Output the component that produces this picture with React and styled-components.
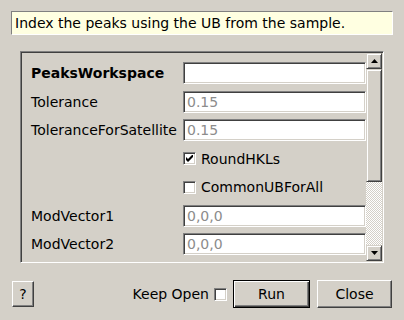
import React from "react";
import styled, { createGlobalStyle } from "styled-components";

const Global = createGlobalStyle`
  html, body { margin: 0; padding: 0; background: #d4d0c8; }
  body { width: 404px; height: 320px; overflow: hidden; font-family: "DejaVu Sans", sans-serif; font-size: 14px; color: #000; }
`;

const Dialog = styled.div`
  width: 404px;
  height: 320px;
  display: flex;
  flex-direction: column;
  box-sizing: border-box;
`;

const Description = styled.div`
  margin: 11px 11px 0 11px;
  height: 24px;
  box-sizing: border-box;
  background: #ffffe1;
  border: 1px solid;
  border-color: #808080 #ffffff #ffffff #808080;
  padding: 0 3px;
  display: flex;
  align-items: center;
  white-space: nowrap;
`;

const Frame = styled.div`
  margin: 16px 20px 0 20px;
  height: 212px;
  box-sizing: border-box;
  border: 1px solid;
  border-color: #808080 #ffffff #ffffff #808080;
  box-shadow: inset 1px 1px #404040, inset -1px -1px #d4d0c8;
  padding: 1px;
  display: flex;
`;

const Viewport = styled.div`
  flex: 1;
  overflow: hidden;
  padding: 9px 0 0 9px;
  display: grid;
  grid-template-columns: 152px 1fr;
  grid-auto-rows: 22px;
  row-gap: 6.5px;
  align-content: start;
`;

const Label = styled.div`
  display: flex;
  align-items: center;
  font-weight: ${(p) => (p.$bold ? "bold" : "normal")};
  white-space: nowrap;
`;

const Input = styled.div`
  box-sizing: border-box;
  height: 22px;
  background: #fff;
  border: 1px solid;
  border-color: #808080 #ffffff #ffffff #808080;
  box-shadow: inset 1px 1px #404040, inset -1px -1px #d4d0c8;
  padding: 0 3px;
  display: flex;
  align-items: center;
  color: #8c8c8c;
  white-space: nowrap;
`;

const CheckRow = styled.label`
  grid-column: 2;
  display: flex;
  align-items: center;
  gap: 5px;
  white-space: nowrap;
`;

const Box = styled.span`
  width: 13px;
  height: 13px;
  box-sizing: border-box;
  background: #fff;
  border: 1px solid;
  border-color: #808080 #ffffff #ffffff #808080;
  box-shadow: inset 1px 1px #404040, inset -1px -1px #d4d0c8;
  display: inline-flex;
  align-items: center;
  justify-content: center;
  flex: none;
`;

const Scrollbar = styled.div`
  width: 16px;
  display: flex;
  flex-direction: column;
`;

const ArrowButton = styled.div`
  height: 16px;
  box-sizing: border-box;
  background: #d4d0c8;
  border: 1px solid;
  border-color: #d4d0c8 #404040 #404040 #d4d0c8;
  box-shadow: inset 1px 1px #fff, inset -1px -1px #808080;
  display: flex;
  align-items: center;
  justify-content: center;
`;

const Handle = styled.div`
  height: 113px;
  box-sizing: border-box;
  background: #d4d0c8;
  border: 1px solid;
  border-color: #d4d0c8 #404040 #404040 #d4d0c8;
  box-shadow: inset 1px 1px #fff, inset -1px -1px #808080;
`;

const Trough = styled.div`
  flex: 1;
  background: repeating-conic-gradient(#ffffff 0 25%, #d4d0c8 0 50%) 0 0 / 2px 2px;
`;

const Footer = styled.div`
  margin-top: 17px;
  padding: 0 12px;
  height: 28px;
  display: flex;
  align-items: center;
`;

const Button = styled.button`
  font-family: "DejaVu Sans", sans-serif;
  font-size: 14px;
  color: #000;
  background: #d4d0c8;
  box-sizing: border-box;
  width: ${(p) => p.$w}px;
  height: ${(p) => p.$h}px;
  margin-left: ${(p) => p.$ml || 0}px;
  padding: 0;
  border: 1px solid;
  border-color: ${(p) => (p.$default ? "#000" : "#ffffff #404040 #404040 #ffffff")};
  box-shadow: ${(p) =>
    p.$default
      ? "inset 1px 1px #fff, inset -1px -1px #404040, inset -2px -2px #808080"
      : "inset -1px -1px #808080"};
`;

const Spacer = styled.div`
  flex: 1;
`;

const KeepOpen = styled.label`
  display: flex;
  align-items: center;
  gap: 5px;
  white-space: nowrap;
`;

const Check = () => (
  <svg width="7" height="7" viewBox="0 0 7 7">
    <path d="M0 2 L2 4 L7 -1 L7 2 L2 7 L0 5 Z" fill="#000" />
  </svg>
);

const Up = () => (
  <svg width="7" height="4" viewBox="0 0 7 4">
    <path d="M3.5 0 L7 4 L0 4 Z" fill="#000" />
  </svg>
);

const Down = () => (
  <svg width="7" height="4" viewBox="0 0 7 4">
    <path d="M0 0 L7 0 L3.5 4 Z" fill="#000" />
  </svg>
);

export default function App() {
  return (
    <Dialog>
      <Global />
      <Description>Index the peaks using the UB from the sample.</Description>
      <Frame>
        <Viewport>
          <Label $bold>PeaksWorkspace</Label>
          <Input />
          <Label>Tolerance</Label>
          <Input>0.15</Input>
          <Label>ToleranceForSatellite</Label>
          <Input>0.15</Input>
          <CheckRow>
            <Box><Check /></Box>
            RoundHKLs
          </CheckRow>
          <CheckRow>
            <Box />
            CommonUBForAll
          </CheckRow>
          <Label>ModVector1</Label>
          <Input>0,0,0</Input>
          <Label>ModVector2</Label>
          <Input>0,0,0</Input>
        </Viewport>
        <Scrollbar>
          <ArrowButton><Up /></ArrowButton>
          <Handle />
          <Trough />
          <ArrowButton><Down /></ArrowButton>
        </Scrollbar>
      </Frame>
      <Footer>
        <Button $w={22} $h={26}>?</Button>
        <Spacer />
        <KeepOpen>
          Keep Open
          <Box />
        </KeepOpen>
        <Button $w={77} $h={28} $ml={6} $default>Run</Button>
        <Button $w={75} $h={28} $ml={7}>Close</Button>
      </Footer>
    </Dialog>
  );
}
